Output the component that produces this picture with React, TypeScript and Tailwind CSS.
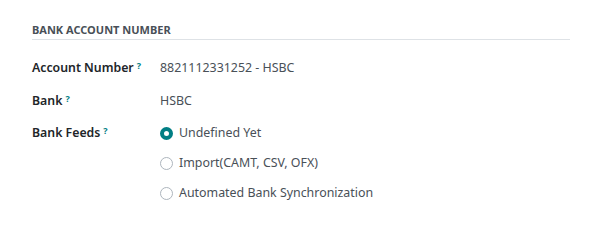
import React from 'react';

const options = [
  { label: 'Undefined Yet', checked: true },
  { label: 'Import(CAMT, CSV, OFX)', checked: false },
  { label: 'Automated Bank Synchronization', checked: false },
];

const Help = () => (
  <sup className="ml-[3px] text-[9px] font-bold text-[#017e84] relative -top-[3px]">?</sup>
);

const Radio = ({ checked }: { checked: boolean }) =>
  checked ? (
    <span className="w-[13px] h-[13px] rounded-full border-[4px] border-[#017e84] bg-white shrink-0" />
  ) : (
    <span className="w-[13px] h-[13px] rounded-full border border-[#adb5bd] bg-white shrink-0" />
  );

export default function App() {
  return (
    <div className="w-[596px] h-[234px] bg-white pl-8 pr-[26px] pt-[24px] font-['Noto_Sans',sans-serif] text-[12.4px]">
      <div className="border-b border-[#dee2e6] pb-[3px] text-[11px] font-bold text-[#495057] uppercase leading-[12px]">
        Bank Account Number
      </div>

      <div className="mt-[19px] flex items-center h-[18px]">
        <div className="w-[128px] font-semibold text-[12.3px] text-[#212529]">
          Account Number
          <Help />
        </div>
        <div className="text-[#495057]">8821112331252 - HSBC</div>
      </div>

      <div className="mt-[15px] flex items-center h-[18px]">
        <div className="w-[128px] font-semibold text-[12.3px] text-[#212529]">
          Bank
          <Help />
        </div>
        <div className="text-[#495057]">HSBC</div>
      </div>

      <div className="mt-[14px] flex">
        <div className="w-[128px] font-semibold text-[12.3px] text-[#212529] h-[18px] flex items-center">
          <span>
            Bank Feeds
            <Help />
          </span>
        </div>
        <div className="flex flex-col gap-[12px]">
          {options.map((o) => (
            <label key={o.label} className="flex items-center gap-[6px] h-[18px] text-[#495057]">
              <Radio checked={o.checked} />
              <span>{o.label}</span>
            </label>
          ))}
        </div>
      </div>
    </div>
  );
}
